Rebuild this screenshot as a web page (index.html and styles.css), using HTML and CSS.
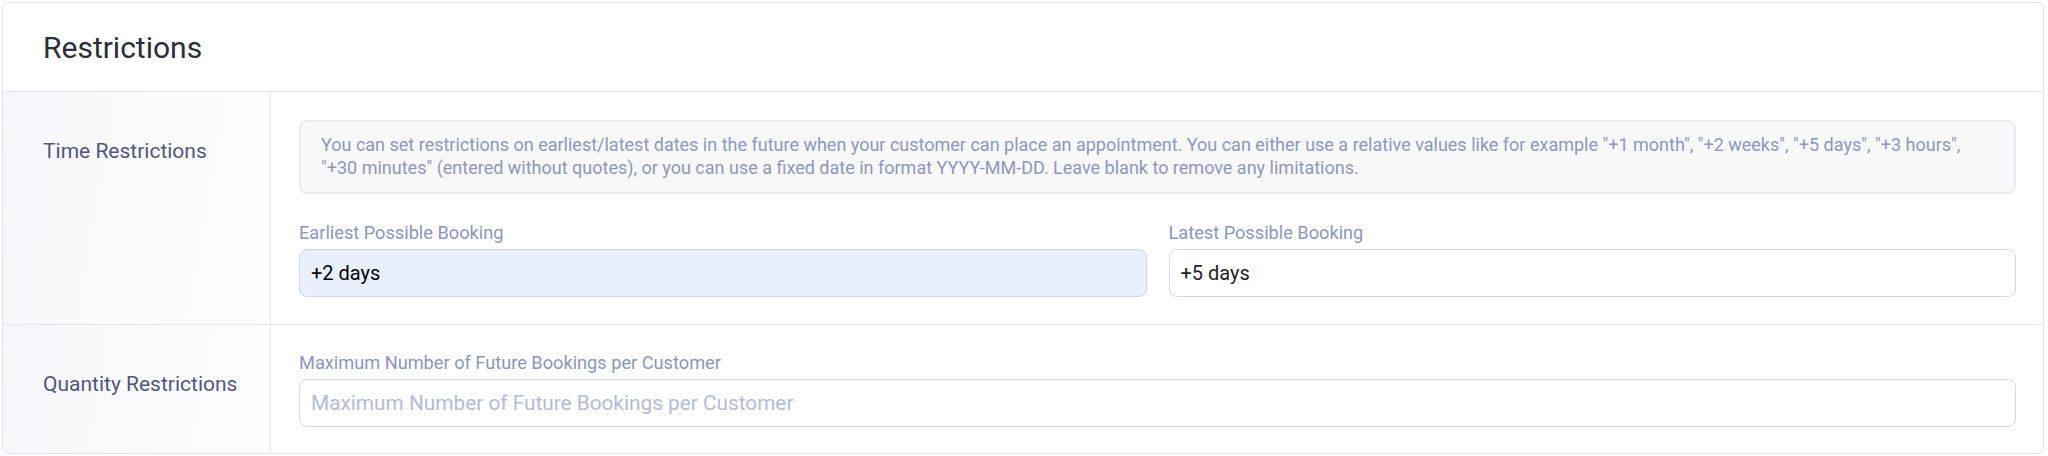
FILE: index.html
```html
<!DOCTYPE html>
<html lang="en">
<head>
<meta charset="utf-8">
<title>Restrictions</title>
<link rel="stylesheet" href="styles.css">
</head>
<body>
<div class="page">
  <section class="card">
    <header class="card-header">
      <h2 class="card-title">Restrictions</h2>
    </header>
    <div class="row">
      <div class="row-label">Time Restrictions</div>
      <div class="row-body">
        <div class="info">You can set restrictions on earliest/latest dates in the future when your customer can place an appointment. You can either use a relative values like for example "+1 month", "+2 weeks", "+5 days", "+3 hours", "+30 minutes" (entered without quotes), or you can use a fixed date in format YYYY-MM-DD. Leave blank to remove any limitations.</div>
        <div class="fields-two">
          <div class="field">
            <label class="field-label" for="earliest">Earliest Possible Booking</label>
            <input class="field-input autofilled" id="earliest" type="text" value="+2 days">
          </div>
          <div class="field">
            <label class="field-label" for="latest">Latest Possible Booking</label>
            <input class="field-input" id="latest" type="text" value="+5 days">
          </div>
        </div>
      </div>
    </div>
    <div class="row row-last">
      <div class="row-label">Quantity Restrictions</div>
      <div class="row-body row-body-compact">
        <div class="field">
          <label class="field-label" for="maxbook">Maximum Number of Future Bookings per Customer</label>
          <input class="field-input" id="maxbook" type="text" placeholder="Maximum Number of Future Bookings per Customer">
        </div>
      </div>
    </div>
  </section>
</div>
</body>
</html>
```

FILE: styles.css
```css
* {
  box-sizing: border-box;
}

html, body {
  margin: 0;
  padding: 0;
  background: #ffffff;
}

body {
  font-family: Roboto, "Noto Sans", "Liberation Sans", sans-serif;
  color: #2b2e38;
}

.page {
  padding: 2px 4px 2px 2px;
}

.card {
  border: 1px solid #e3e3ec;
  border-radius: 6px;
  background: #ffffff;
  overflow: hidden;
}

.card-header {
  height: 89px;
  display: flex;
  align-items: center;
  padding-left: 40px;
  border-bottom: 1px solid #e3e3ec;
}

.card-title {
  margin: 0;
  font-size: 30px;
  font-weight: 400;
  line-height: 36px;
  color: #2b2e38;
  padding-top: 2px;
}

.row {
  display: grid;
  grid-template-columns: 268px 1fr;
  border-bottom: 1px solid #e6e6ee;
}

.row-last {
  border-bottom: none;
}

.row-label {
  padding: 44px 20px 0 40px;
  font-size: 21px;
  font-weight: 400;
  line-height: 30px;
  color: #52567f;
  background: linear-gradient(100deg, #f6f6fa 0%, #fbfbfd 60%, #fcfcfe 100%);
  border-right: 1px solid #e6e6ee;
}

.row-body {
  padding: 28px 27px 27px 28px;
}

.row-body-compact {
  padding-top: 27px;
  padding-bottom: 26px;
}

.info {
  border: 2px solid #e9e9f1;
  border-radius: 8px;
  background: #f8f8f9;
  padding: 12px 20px 13px;
  font-size: 18px;
  line-height: 22.5px;
  color: #8d97bf;
}

.fields-two {
  margin-top: 28px;
  display: grid;
  grid-template-columns: 1fr 1fr;
  gap: 22px;
}

.field {
  display: flex;
  flex-direction: column;
}

.field-label {
  font-size: 18.2px;
  line-height: 22px;
  color: #8a96bf;
  margin-bottom: 5px;
}

.field-input {
  height: 48px;
  width: 100%;
  border: 1px solid #d4d8e1;
  border-radius: 8px;
  padding: 0 11px;
  font-family: Roboto, "Noto Sans", "Liberation Sans", sans-serif;
  font-size: 20px;
  color: #1f2128;
  background: #ffffff;
  outline: none;
}

.field-input::placeholder {
  color: #b2bbd8;
  font-size: 20.8px;
}

.autofilled {
  background: #e8f0fe;
  border-color: #cdd5e4;
  color: #000000;
}
```
